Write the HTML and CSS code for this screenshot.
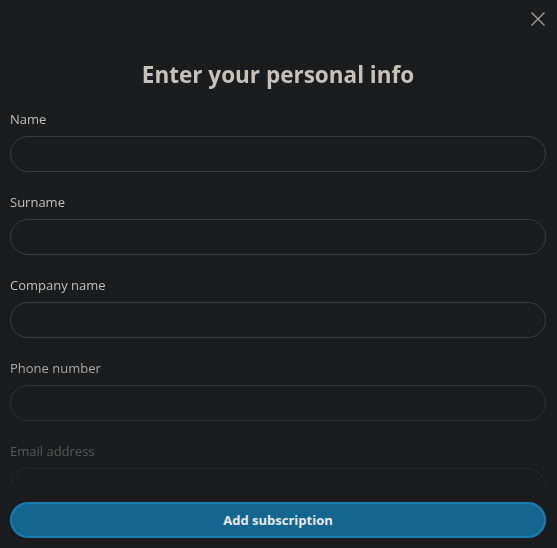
FILE: index.html
```html
<!DOCTYPE html>
<html lang="en">
<head>
<meta charset="utf-8">
<title>Enter your personal info</title>
<link rel="stylesheet" href="styles.css">
</head>
<body>
<div class="dialog">
  <div class="topbar">
    <button class="close" aria-label="Close">
      <svg width="16" height="16" viewBox="0 0 16 16"><path d="M1.5 1.5 L14.5 14.5 M14.5 1.5 L1.5 14.5" stroke="#a39e98" stroke-width="1.4" fill="none"/></svg>
    </button>
  </div>
  <div class="scroll">
    <h1 class="title">Enter your personal info</h1>
    <form class="form">
      <label class="field"><span class="label">Name</span><input class="input" type="text"></label>
      <label class="field"><span class="label">Surname</span><input class="input" type="text"></label>
      <label class="field"><span class="label">Company name</span><input class="input" type="text"></label>
      <label class="field"><span class="label">Phone number</span><input class="input" type="text"></label>
      <label class="field"><span class="label">Email address</span><input class="input" type="text"></label>
    </form>
  </div>
  <div class="footer">
    <button class="submit">Add subscription</button>
  </div>
</div>
</body>
</html>
```
FILE: styles.css
```css
html, body {
  margin: 0;
  padding: 0;
  background: #1b1c1e;
  height: 100%;
}
body {
  font-family: "Open Sans", "Noto Sans", sans-serif;
  color: #c4bfb9;
}
.dialog {
  display: flex;
  flex-direction: column;
  height: 548px;
}
.topbar {
  display: flex;
  justify-content: flex-end;
  padding: 10px 10px 0 0;
  height: 20px;
}
.close {
  background: none;
  border: none;
  padding: 0;
  width: 18px;
  height: 18px;
  display: flex;
  align-items: center;
  justify-content: center;
  cursor: pointer;
}
.scroll {
  flex: 1;
  overflow: hidden;
  padding: 0 11px 0 10px;
  -webkit-mask-image: linear-gradient(to bottom, #000 0, #000 320px, rgba(0,0,0,0.85) 338px, rgba(0,0,0,0.36) 421px, rgba(0,0,0,0.3) 452px);
  mask-image: linear-gradient(to bottom, #000 0, #000 320px, rgba(0,0,0,0.85) 338px, rgba(0,0,0,0.36) 421px, rgba(0,0,0,0.3) 452px);
}
.title {
  margin: 30px 0 20px;
  text-align: center;
  font-size: 22.5px;
  line-height: 30px;
  font-weight: 700;
  color: #c7c1ba;
}
.form {
  display: flex;
  flex-direction: column;
  gap: 21px;
}
.field {
  display: flex;
  flex-direction: column;
  gap: 8px;
}
.label {
  font-size: 13px;
  line-height: 18px;
  color: #c4bfb9;
}
.input {
  box-sizing: border-box;
  height: 36px;
  width: 100%;
  border: 1px solid #3b3c3e;
  border-radius: 18px;
  background: #1b1c1e;
  padding: 0 16px;
  font: inherit;
  color: #c4bfb9;
  outline: none;
}
.footer {
  padding: 20px 11px 10px 10px;
}
.submit {
  box-sizing: border-box;
  width: 100%;
  height: 36px;
  border-radius: 18px;
  border: 2px solid #1b7cb2;
  background: #14668f;
  color: #e9e9e9;
  font-family: inherit;
  font-size: 13px;
  font-weight: 700;
  cursor: pointer;
}
```
